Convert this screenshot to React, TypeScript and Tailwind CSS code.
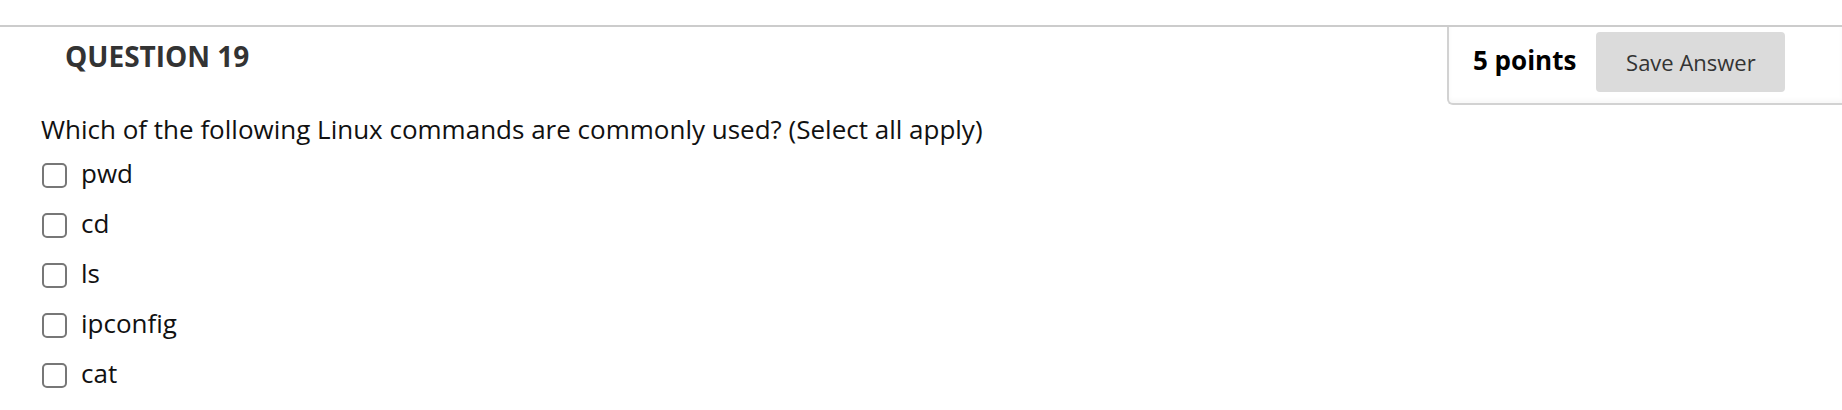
const options = ['pwd', 'cd', 'ls', 'ipconfig', 'cat'];

export default function App() {
  return (
    <div className="min-h-screen bg-white pt-[25px] font-['Open_Sans',sans-serif]">
      <div className="border-t-2 border-[#cccccc]">
        <div className="flex justify-between">
          <h2 className="pl-[65px] pt-[10px] text-[28px] leading-[38px] font-bold text-[#333333]">
            QUESTION 19
          </h2>
          <div className="w-[395px] h-[78px] border-l-2 border-b-2 border-[#d2d2d2] rounded-bl-[6px] shadow-[inset_0_-3px_4px_rgba(0,0,0,0.03)] flex items-start pt-[5px] pl-[24px]">
            <div className="h-[60px] flex items-center gap-[20px]">
              <span className="text-[26px] font-bold text-black mb-[4px]">5 points</span>
              <button className="w-[189px] h-[60px] rounded-[4px] bg-[#dbdbdb] text-[22px] text-[#333333]">
                Save Answer
              </button>
            </div>
          </div>
        </div>
        <p className="pl-[41px] pt-[7px] text-[26px] leading-[35px] text-[#111111]">
          Which of the following Linux commands are commonly used? (Select all apply)
        </p>
        <ul className="pt-[3px] pl-[42px]">
          {options.map((opt) => (
            <li key={opt} className="h-[50px] flex items-center gap-[14px]">
              <span className="w-[25px] h-[25px] rounded-[5px] border-2 border-[#777777] bg-white" />
              <span className="text-[26px] leading-[35px] text-[#111111] mb-[4px]">{opt}</span>
            </li>
          ))}
        </ul>
      </div>
    </div>
  );
}
